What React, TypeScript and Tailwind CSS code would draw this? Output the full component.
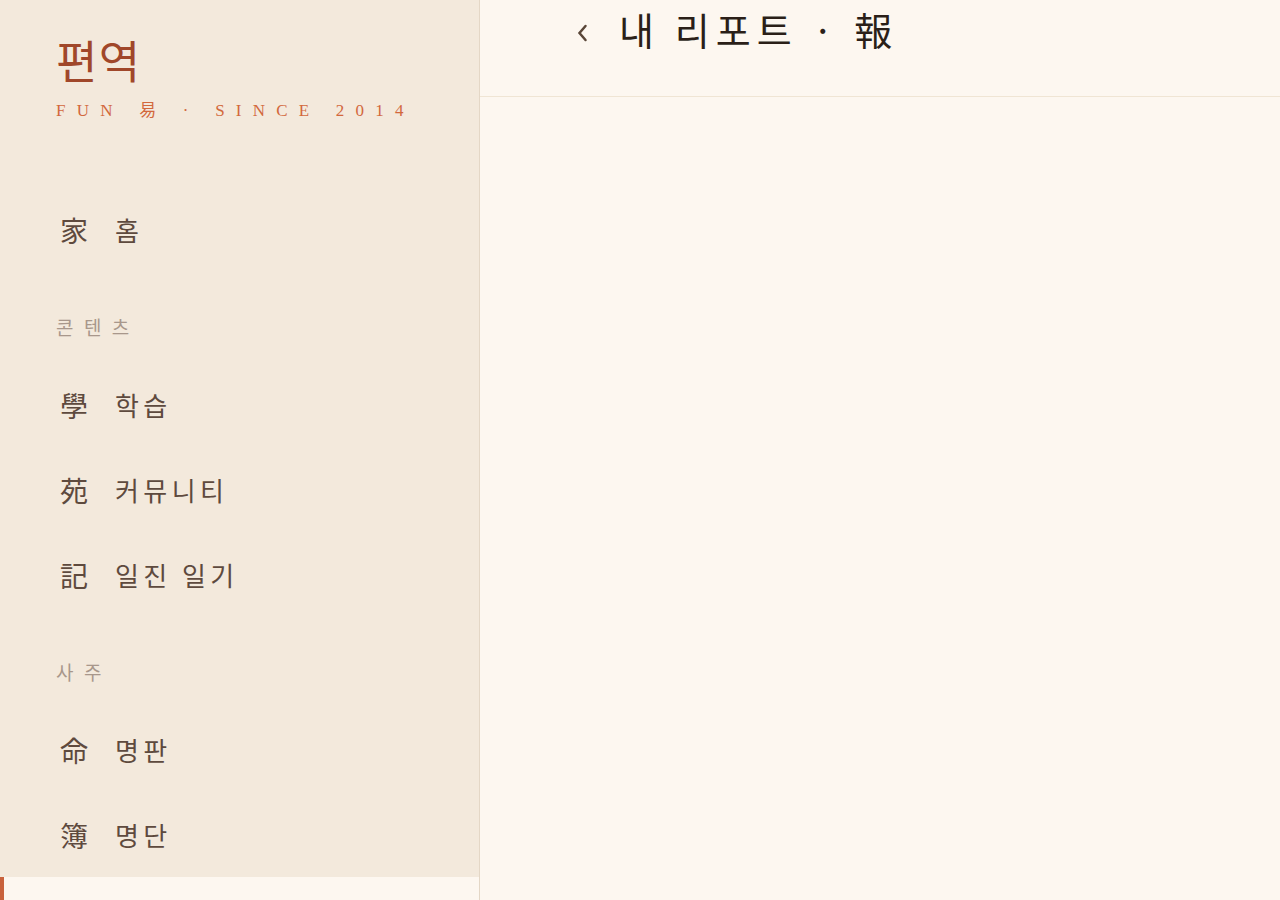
import React from 'react';

const serif = "font-['Liberation_Serif','Noto_Sans_CJK_KR',serif]";
const kr = "font-['Noto_Sans_CJK_KR','Noto_Sans_CJK_SC',sans-serif]";

interface NavItem {
  glyph: string;
  label: string;
  active?: boolean;
}

const NavRow: React.FC<NavItem> = ({ glyph, label, active }) => (
  <div
    className={`flex h-[85px] shrink-0 items-center gap-[25px] pl-[60px] ${
      active ? 'border-l-4 border-[#c9623c] bg-[#fdf7f0] pl-[56px]' : ''
    }`}
  >
    <span className="w-[30px] text-[28px] leading-none text-[#5e4a3e]">{glyph}</span>
    <span className="text-[26px] leading-none tracking-[0.17em] text-[#5e4a3e]">{label}</span>
  </div>
);

const SectionLabel: React.FC<{ text: string }> = ({ text }) => (
  <div className="mt-[45px] mb-[25px] pl-[56px] text-[19px] leading-[20px] tracking-[0.55em] text-[#a8978b]">
    {text}
  </div>
);

export default function App() {
  return (
    <div className={`flex h-[900px] w-full overflow-hidden bg-[#fdf7f0] ${kr}`}>
      {/* sidebar */}
      <aside className="flex w-[480px] shrink-0 flex-col overflow-hidden border-r border-[#e4d7c6] bg-[#f3e9dc]">
        <div className="shrink-0 pt-[33px] pl-[56px] pb-[66px]">
          <div className="text-[45px] leading-[53px] tracking-[0.03em] text-[#a0472a]">편역</div>
          <div className={`mt-[15px] text-[17px] leading-[20px] tracking-[0.66em] text-[#d2683c] ${serif}`}>
            FUN 易 · SINCE 2014
          </div>
        </div>

        <NavRow glyph="家" label="홈" />

        <SectionLabel text="콘텐츠" />
        <NavRow glyph="學" label="학습" />
        <NavRow glyph="苑" label="커뮤니티" />
        <NavRow glyph="記" label="일진 일기" />

        <SectionLabel text="사주" />
        <NavRow glyph="命" label="명판" />
        <NavRow glyph="簿" label="명단" />
        <NavRow glyph="報" label="내 리포트" active />
      </aside>

      {/* main */}
      <main className="flex min-w-0 flex-1 flex-col">
        <header className="flex h-[97px] shrink-0 items-start border-b border-[#f0e5d4] pl-[97px] pt-[7px]">
          <div className="flex h-[44px] items-center gap-[31px]">
            <svg width="11" height="18" viewBox="0 0 11 18" className="mt-[8px]">
              <path d="M8.5 2 L2.5 9 L8.5 16" fill="none" stroke="#5a4638" strokeWidth="2.5" strokeLinecap="round" />
            </svg>
            <h1 className="text-[38px] font-normal leading-[44px] tracking-[0.16em] text-[#2b1f18]">
              내 리포트 · 報
            </h1>
          </div>
        </header>
        <div className="flex-1" />
      </main>
    </div>
  );
}
